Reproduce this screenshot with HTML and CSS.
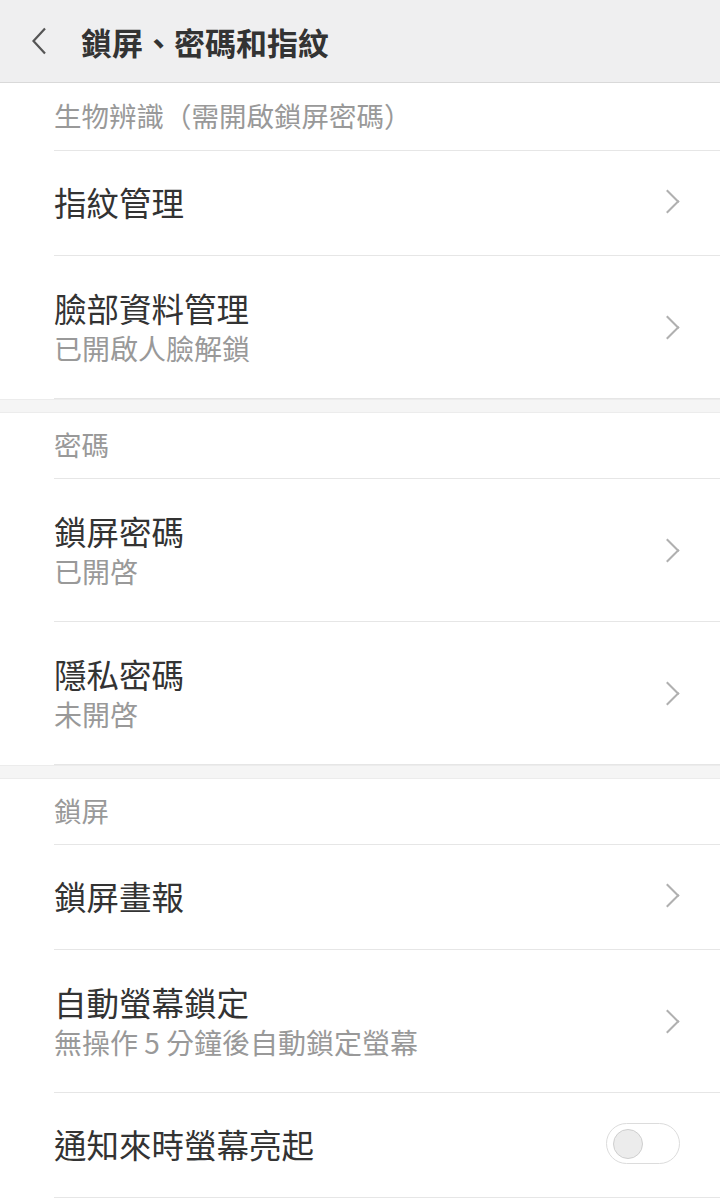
FILE: index.html
```html
<!DOCTYPE html>
<html lang="zh-Hant">
<head>
    <meta charset="UTF-8">
    <meta name="viewport" content="width=device-width, initial-scale=1.0">
    <title>鎖屏、密碼和指紋</title>
    <link rel="stylesheet" href="styles.css">
</head>
<body>
    <div class="topbar">
        <svg class="back" width="20" height="28" viewBox="0 0 20 28">
            <path d="M15 1.5 L3.5 14 L15 26.5" fill="none" stroke="#555" stroke-width="2.2"/>
        </svg>
        <h1 class="title">鎖屏、密碼和指紋</h1>
    </div>

    <div class="group">
        <div class="group-head first">生物辨識（需開啟鎖屏密碼）</div>
        <div class="item">
            <div class="text"><div class="name">指紋管理</div></div>
            <span class="arrow"></span>
        </div>
        <div class="item tall">
            <div class="text">
                <div class="name">臉部資料管理</div>
                <div class="sub">已開啟人臉解鎖</div>
            </div>
            <span class="arrow"></span>
        </div>
    </div>

    <div class="gap"></div>

    <div class="group">
        <div class="group-head">密碼</div>
        <div class="item tall">
            <div class="text">
                <div class="name">鎖屏密碼</div>
                <div class="sub">已開啓</div>
            </div>
            <span class="arrow"></span>
        </div>
        <div class="item tall">
            <div class="text">
                <div class="name">隱私密碼</div>
                <div class="sub">未開啓</div>
            </div>
            <span class="arrow"></span>
        </div>
    </div>

    <div class="gap"></div>

    <div class="group">
        <div class="group-head">鎖屏</div>
        <div class="item">
            <div class="text"><div class="name">鎖屏畫報</div></div>
            <span class="arrow"></span>
        </div>
        <div class="item tall">
            <div class="text">
                <div class="name">自動螢幕鎖定</div>
                <div class="sub">無操作 5 分鐘後自動鎖定螢幕</div>
            </div>
            <span class="arrow"></span>
        </div>
        <div class="item">
            <div class="text"><div class="name">通知來時螢幕亮起</div></div>
            <span class="switch"><span class="knob"></span></span>
        </div>
    </div>
</body>
</html>
```

FILE: styles.css
```css
body {
    margin: 0;
    background: #fff;
    font-family: "Noto Sans CJK TC", "Noto Sans", sans-serif;
    color: #333;
}

.topbar {
    height: 82px;
    background: #efeff0;
    border-bottom: 1px solid #d9d9d9;
    display: flex;
    align-items: center;
    padding-left: 30px;
}
.back {
    margin-right: 31px;
}
.title {
    margin: 0;
    font-size: 31px;
    font-weight: 700;
    color: #333;
}

.group-head {
    height: 66px;
    margin-left: 54px;
    border-bottom: 1px solid #e6e6e6;
    box-sizing: border-box;
    display: flex;
    align-items: center;
    padding-bottom: 3px;
    font-size: 27.5px;
    color: #999;
}
.group-head.first {
    height: 68px;
    padding-bottom: 3px;
}

.item {
    height: 105px;
    margin-left: 54px;
    border-bottom: 1px solid #e6e6e6;
    box-sizing: border-box;
    display: flex;
    align-items: center;
    padding-right: 40px;
    padding-bottom: 3px;
}
.item.tall {
    height: 143px;
    padding-bottom: 0;
}
.text {
    flex: 1;
}
.name {
    font-size: 32.5px;
    line-height: 42px;
}
.sub {
    font-size: 28px;
    line-height: 38px;
    color: #999;
}

.arrow {
    width: 15px;
    height: 15px;
    border-top: 2px solid #b0b0b0;
    border-right: 2px solid #b0b0b0;
    transform: rotate(45deg);
    margin-right: 4px;
}

.switch {
    width: 66px;
    height: 39px;
    border: 1px solid #dcdcdc;
    border-radius: 21px;
    display: flex;
    align-items: center;
    padding-left: 6px;
    box-sizing: content-box;
}
.knob {
    width: 28px;
    height: 28px;
    border-radius: 50%;
    background: #ececec;
    border: 1px solid #cfcfcf;
}

.gap {
    height: 12px;
    background: #f5f5f5;
    border-top: 1px solid #ececec;
    border-bottom: 1px solid #ececec;
}
```
